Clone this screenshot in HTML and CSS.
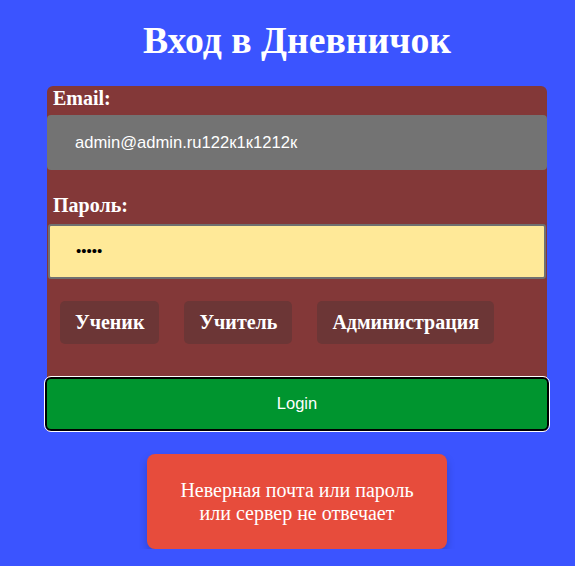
FILE: index.html
```html
<!DOCTYPE html>
<html lang="ru">
<head>
<meta charset="utf-8">
<title>Вход в Дневничок</title>
<link rel="stylesheet" href="styles.css">
</head>
<body>
<div class="wrap">
  <h1 class="title">Вход в Дневничок</h1>
  <form class="card">
    <label class="label">Email:</label>
    <div class="input email">admin@admin.ru122к1к1212к</div>
    <label class="label pass-label">Пароль:</label>
    <div class="input pass">•••••</div>
    <div class="roles">
      <span class="role">Ученик</span>
      <span class="role">Учитель</span>
      <span class="role">Администрация</span>
    </div>
    <button type="button" class="login">Login</button>
  </form>
  <div class="error">Неверная почта или пароль<br>или сервер не отвечает</div>
</div>
</body>
</html>
```
FILE: styles.css
```css
html, body {
  margin: 0;
  padding: 0;
  background: #3b54ff;
}
body {
  font-family: "Liberation Serif", "Times New Roman", serif;
  color: #fff;
}
.wrap {
  width: 500px;
  margin-left: 47px;
  display: flex;
  flex-direction: column;
}
.title {
  margin: 18px 0 0;
  height: 68px;
  font-size: 37.7px;
  font-weight: bold;
  text-align: center;
  line-height: 44px;
}
.card {
  background: #833838;
  border-radius: 6px 6px 0 0;
  display: flex;
  flex-direction: column;
  margin: 0;
}
.label {
  font-weight: bold;
  font-size: 20px;
  line-height: 24px;
  padding: 0 6px 5px;
}
.pass-label {
  padding-top: 23px;
  padding-bottom: 7px;
}
.input {
  font-family: "Liberation Sans", Arial, sans-serif;
  font-size: 16.6px;
  height: 55px;
  line-height: 55px;
  padding-left: 28px;
  box-sizing: border-box;
}
.email {
  background: #737373;
  border-radius: 4px;
}
.pass {
  background: #ffe998;
  border: 2px solid #707070;
  border-radius: 3px;
  margin: 0 1px;
  padding-left: 26px;
  color: #000;
  font-size: 15px;
  line-height: 50px;
}
.roles {
  display: flex;
  gap: 25px;
  padding: 22px 13px 33px;
}
.role {
  background: #6c3636;
  border-radius: 5px;
  font-weight: bold;
  font-size: 20px;
  height: 43px;
  line-height: 43px;
  padding: 0 15px;
}
.login {
  margin: 0 -2px;
  height: 54px;
  background: #00952f;
  border: 2px solid #000;
  outline: 1px solid #fff;
  outline-offset: 0;
  border-radius: 6px;
  color: #fff;
  font-family: "Liberation Sans", Arial, sans-serif;
  font-size: 16.5px;
  padding-bottom: 2px;
}
.error {
  align-self: center;
  margin-top: 23px;
  width: 300px;
  height: 95px;
  box-sizing: border-box;
  background: #e74c3c;
  border-radius: 8px;
  box-shadow: 0 4px 8px rgba(0, 0, 0, 0.2);
  display: flex;
  align-items: center;
  justify-content: center;
  text-align: center;
  font-size: 20px;
  line-height: 23px;
  padding-top: 1px;
}
```
